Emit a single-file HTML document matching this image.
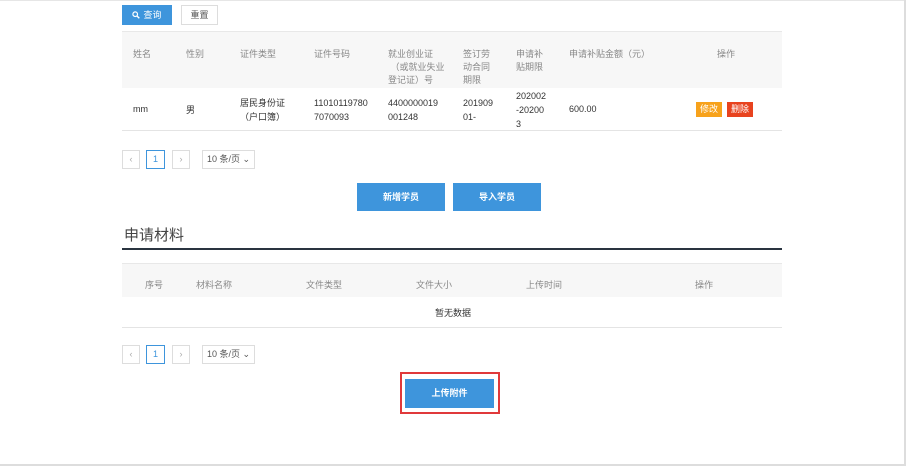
<!DOCTYPE html>
<html><head><meta charset="utf-8"><style>
*{margin:0;padding:0;box-sizing:border-box}
body{width:906px;height:466px;position:relative;background:#fff;font-family:"Liberation Sans","Noto Sans CJK SC",sans-serif;font-size:9px;color:#333;overflow:hidden}
.a{position:absolute;white-space:nowrap}
.h{color:#888;line-height:13px}
.btn{position:absolute;background:#3e95dc;color:#fff;font-weight:bold;text-align:center;font-size:9px}
.pg{position:absolute;border:1px solid #ddd;height:19px;color:#aaa;text-align:center;line-height:17px;font-size:9px}
</style></head><body>
<div class="a" style="left:0;top:0;width:906px;height:1px;background:#e6e6e6"></div>
<div class="a" style="left:904px;top:0;width:2px;height:466px;background:#ddd"></div>
<div class="a" style="left:0;top:464px;width:906px;height:2px;background:#ddd"></div>

<div class="btn" style="left:122px;top:5px;width:50px;height:20px;line-height:20px;font-weight:normal"><svg width="8" height="8" viewBox="0 0 8 8" style="vertical-align:-1px;margin-right:3px"><circle cx="3.2" cy="3.2" r="2.3" fill="none" stroke="#fff" stroke-width="1.2"/><path d="M5 5L7.3 7.3" stroke="#fff" stroke-width="1.4"/></svg>查询</div>
<div class="a" style="left:181px;top:5px;width:37px;height:20px;border:1px solid #ddd;text-align:center;line-height:18px;color:#555">重置</div>

<div class="a" style="left:122px;top:31px;width:660px;height:57px;background:#f7f7f7;border-top:1px solid #e8e8e8"></div>
<div class="a" style="left:122px;top:130px;width:660px;height:1px;background:#e4e4e4"></div>
<div class="a h" style="left:133px;top:48px">姓名</div>
<div class="a h" style="left:186px;top:48px">性别</div>
<div class="a h" style="left:240px;top:48px">证件类型</div>
<div class="a h" style="left:314px;top:48px">证件号码</div>
<div class="a h" style="left:388px;top:48px">就业创业证<br>&nbsp;（或就业失业<br>登记证）号</div>
<div class="a h" style="left:463px;top:48px">签订劳<br>动合同<br>期限</div>
<div class="a h" style="left:516px;top:48px">申请补<br>贴期限</div>
<div class="a h" style="left:569px;top:48px">申请补贴金额（元）</div>
<div class="a h" style="left:717px;top:48px">操作</div>

<div class="a" style="left:133px;top:104px">mm</div>
<div class="a" style="left:186px;top:103px">男</div>
<div class="a" style="left:240px;top:96px;line-height:14px;text-align:center">居民身份证<br>（户口簿）</div>
<div class="a" style="left:314px;top:96px;line-height:14px">11010119780<br>7070093</div>
<div class="a" style="left:388px;top:96px;line-height:14px">4400000019<br>001248</div>
<div class="a" style="left:463px;top:96px;line-height:14px">201909<br>01-</div>
<div class="a" style="left:516px;top:89px;line-height:14px">202002<br>-20200<br>3</div>
<div class="a" style="left:569px;top:104px">600.00</div>
<div class="a" style="left:696px;top:102px;width:26px;height:15px;background:#f7a21b;color:#fff;text-align:center;line-height:15px">修改</div>
<div class="a" style="left:727px;top:102px;width:26px;height:15px;background:#e8431f;color:#fff;text-align:center;line-height:15px">删除</div>

<div class="pg" style="left:122px;top:150px;width:18px">‹</div>
<div class="pg" style="left:146px;top:150px;width:19px;border-color:#3e95dc;color:#3e95dc">1</div>
<div class="pg" style="left:172px;top:150px;width:18px">›</div>
<div class="pg" style="left:202px;top:150px;width:53px;color:#555">10 条/页 ⌄</div>

<div class="btn" style="left:357px;top:183px;width:88px;height:28px;line-height:28px">新增学员</div>
<div class="btn" style="left:453px;top:183px;width:88px;height:28px;line-height:28px">导入学员</div>

<div class="a" style="left:124px;top:224px;font-size:15px;color:#444">申请材料</div>
<div class="a" style="left:122px;top:248px;width:660px;height:2px;background:#2a3440"></div>

<div class="a" style="left:122px;top:263px;width:660px;height:34px;background:#f7f7f7;border-top:1px solid #e8e8e8"></div>
<div class="a" style="left:122px;top:327px;width:660px;height:1px;background:#e4e4e4"></div>
<div class="a h" style="left:145px;top:279px">序号</div>
<div class="a h" style="left:196px;top:279px">材料名称</div>
<div class="a h" style="left:306px;top:279px">文件类型</div>
<div class="a h" style="left:416px;top:279px">文件大小</div>
<div class="a h" style="left:526px;top:279px">上传时间</div>
<div class="a h" style="left:695px;top:279px">操作</div>
<div class="a" style="left:435px;top:306px">暂无数据</div>

<div class="pg" style="left:122px;top:345px;width:18px">‹</div>
<div class="pg" style="left:146px;top:345px;width:19px;border-color:#3e95dc;color:#3e95dc">1</div>
<div class="pg" style="left:172px;top:345px;width:18px">›</div>
<div class="pg" style="left:202px;top:345px;width:53px;color:#555">10 条/页 ⌄</div>

<div class="a" style="left:400px;top:372px;width:100px;height:42px;border:2px solid #e0393b"></div>
<div class="btn" style="left:405px;top:379px;width:89px;height:29px;line-height:29px">上传附件</div>
</body></html>
